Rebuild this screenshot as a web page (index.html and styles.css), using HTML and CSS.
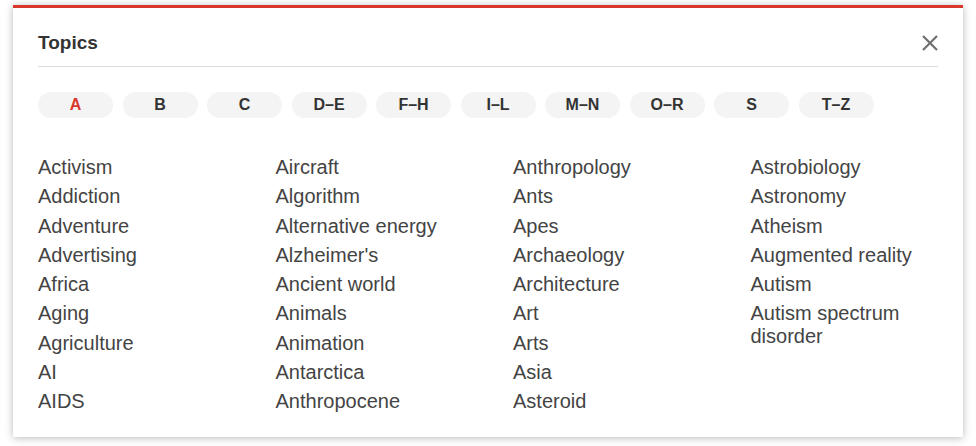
FILE: index.html
```html
<!DOCTYPE html>
<html lang="en">
<head>
<meta charset="utf-8">
<title>Topics</title>
<link rel="stylesheet" href="styles.css">
</head>
<body>
<div class="page">
  <div class="modal">
    <div class="modal-header">
      <h2 class="title">Topics</h2>
      <button class="close" aria-label="Close">
        <svg width="18" height="18" viewBox="0 0 18 18"><path d="M2 2 L16 16 M16 2 L2 16" stroke="#6f6f6f" stroke-width="2.2" fill="none"/></svg>
      </button>
    </div>
    <div class="pills">
      <span class="pill active">A</span>
      <span class="pill">B</span>
      <span class="pill">C</span>
      <span class="pill">D–E</span>
      <span class="pill">F–H</span>
      <span class="pill">I–L</span>
      <span class="pill">M–N</span>
      <span class="pill">O–R</span>
      <span class="pill">S</span>
      <span class="pill">T–Z</span>
    </div>
    <div class="topics">
      <ul class="col">
        <li>Activism</li><li>Addiction</li><li>Adventure</li><li>Advertising</li><li>Africa</li><li>Aging</li><li>Agriculture</li><li>AI</li><li>AIDS</li>
      </ul>
      <ul class="col">
        <li>Aircraft</li><li>Algorithm</li><li>Alternative energy</li><li>Alzheimer's</li><li>Ancient world</li><li>Animals</li><li>Animation</li><li>Antarctica</li><li>Anthropocene</li>
      </ul>
      <ul class="col">
        <li>Anthropology</li><li>Ants</li><li>Apes</li><li>Archaeology</li><li>Architecture</li><li>Art</li><li>Arts</li><li>Asia</li><li>Asteroid</li>
      </ul>
      <ul class="col">
        <li>Astrobiology</li><li>Astronomy</li><li>Atheism</li><li>Augmented reality</li><li>Autism</li><li>Autism spectrum disorder</li>
      </ul>
    </div>
  </div>
</div>
</body>
</html>
```

FILE: styles.css
```css
html, body {
  margin: 0;
  padding: 0;
  background: #ffffff;
  font-family: "Liberation Sans", Arial, sans-serif;
}

.page {
  width: 976px;
  height: 446px;
  padding: 5px 13px 0;
  box-sizing: border-box;
  overflow: hidden;
}

.modal {
  width: 950px;
  height: 432px;
  box-sizing: border-box;
  background: #fff;
  border-top: 3px solid #d9372b;
  padding: 0 25px;
  box-shadow: 0 1px 8px rgba(0, 0, 0, 0.28);
}

.modal-header {
  display: flex;
  justify-content: space-between;
  align-items: center;
  padding: 24px 0 12px;
  border-bottom: 1px solid #dcdcdc;
}

.title {
  margin: 0;
  font-size: 19px;
  line-height: 22px;
  font-weight: bold;
  color: #333;
}

.close {
  border: 0;
  background: none;
  padding: 0;
  margin-right: -1px;
  width: 18px;
  height: 18px;
  display: flex;
  cursor: pointer;
}

.pills {
  display: flex;
  gap: 9.5px;
  margin-top: 25px;
}

.pill {
  flex: 0 0 75px;
  height: 26px;
  line-height: 26px;
  border-radius: 13px;
  background: #f4f4f4;
  text-align: center;
  font-size: 16px;
  font-weight: bold;
  color: #333;
}

.pill.active {
  color: #d9372b;
}

.topics {
  display: grid;
  grid-template-columns: repeat(4, 1fr);
  column-gap: 50px;
  margin-top: 38px;
}

.col {
  list-style: none;
  margin: 0;
  padding: 0;
}

.col li {
  font-size: 20px;
  line-height: 23px;
  margin-bottom: 6.25px;
  color: #444;
}
```
